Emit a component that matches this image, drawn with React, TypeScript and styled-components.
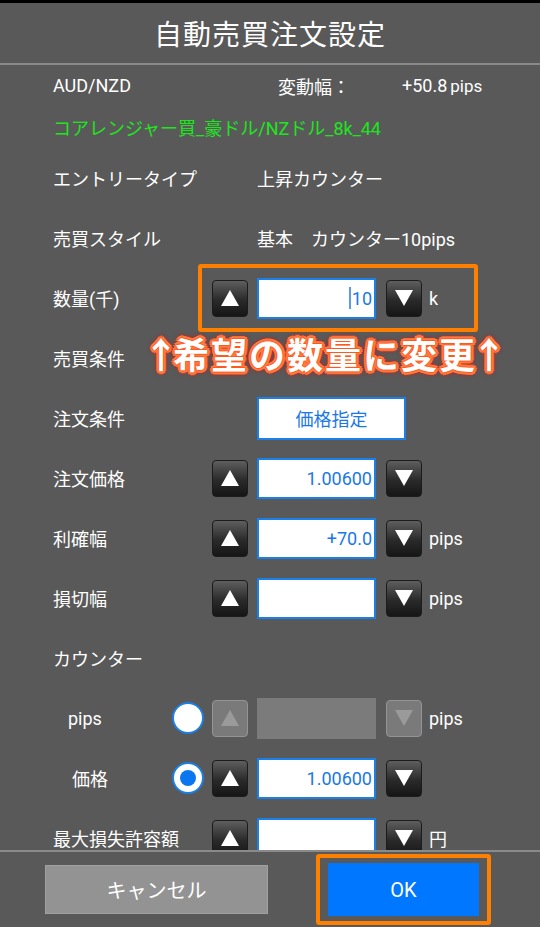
import styled, { createGlobalStyle, css } from "styled-components"

const GlobalStyle = createGlobalStyle`
    html, body {
        margin: 0;
        padding: 0;
        background: #595959;
    }
    body {
        font-family: Roboto, 'Noto Sans CJK JP', sans-serif;
        color: #fff;
    }
`

const ArrowUp = ({ disabled }: { disabled?: boolean }) => (
    <svg width="20" height="18" viewBox="0 0 20 18">
        <polygon points="10,1 19,17 1,17" fill={disabled ? '#9a9a9a' : '#fff'} />
    </svg>
)

const ArrowDown = ({ disabled }: { disabled?: boolean }) => (
    <svg width="20" height="18" viewBox="0 0 20 18">
        <polygon points="1,1 19,1 10,17" fill={disabled ? '#9a9a9a' : '#fff'} />
    </svg>
)

type StepperProps = {
    value?: string
    unit?: string
    disabled?: boolean
}

const Stepper = ({ value, unit, disabled }: StepperProps) => (
    <Controls>
        <StepButton $disabled={disabled}><ArrowUp disabled={disabled} /></StepButton>
        <NumberBox $disabled={disabled}>{value}</NumberBox>
        <StepButton $disabled={disabled}><ArrowDown disabled={disabled} /></StepButton>
        {unit && <Unit>{unit}</Unit>}
    </Controls>
)

const App = () => {
    return (
        <>
            <GlobalStyle />
            <Screen>
                <StatusBar />
                <TitleBar>自動売買注文設定</TitleBar>
                <Divider />

                <Body>
                    <InfoRow $height={41}>
                        <Pair>AUD/NZD</Pair>
                        <InfoLabel>変動幅：</InfoLabel>
                        <InfoValue>+50.8<Small>pips</Small></InfoValue>
                    </InfoRow>
                    <InfoRow $height={42} $green>コアレンジャー買_豪ドル/NZドル_8k_44</InfoRow>

                    <Row>
                        <Label>エントリータイプ</Label>
                        <Value>上昇カウンター</Value>
                    </Row>
                    <Row>
                        <Label>売買スタイル</Label>
                        <Value>基本　カウンター10pips</Value>
                    </Row>
                    <Row>
                        <Label>数量(千)</Label>
                        <Highlighted>
                            <Controls>
                                <StepButton><ArrowUp /></StepButton>
                                <NumberBox><Caret />10</NumberBox>
                                <StepButton><ArrowDown /></StepButton>
                                <Unit>k</Unit>
                            </Controls>
                        </Highlighted>
                    </Row>
                    <Row>
                        <Label>売買条件</Label>
                        <Annotation>
                            <Arrow>↑</Arrow>希望の数量に変更<Arrow>↑</Arrow>
                        </Annotation>
                    </Row>
                    <Row>
                        <Label>注文条件</Label>
                        <SelectBox>価格指定</SelectBox>
                    </Row>
                    <Row>
                        <Label>注文価格</Label>
                        <Stepper value="1.00600" />
                    </Row>
                    <Row>
                        <Label>利確幅</Label>
                        <Stepper value="+70.0" unit="pips" />
                    </Row>
                    <Row>
                        <Label>損切幅</Label>
                        <Stepper value="" unit="pips" />
                    </Row>
                    <Row>
                        <Label>カウンター</Label>
                    </Row>
                    <Row>
                        <Label $indent={15}>
                            pips
                            <Radio />
                        </Label>
                        <Stepper value="" unit="pips" disabled />
                    </Row>
                    <Row>
                        <Label $indent={19}>
                            価格
                            <Radio $checked />
                        </Label>
                        <Stepper value="1.00600" />
                    </Row>
                    <Row>
                        <Label>最大損失許容額</Label>
                        <Stepper value="" unit="円" />
                    </Row>
                </Body>

                <Footer>
                    <CancelButton>キャンセル</CancelButton>
                    <OkFrame>
                        <OkButton>OK</OkButton>
                    </OkFrame>
                </Footer>
            </Screen>
        </>
    )
}

const Screen = styled.div`
    width: 540px;
    height: 927px;
    display: flex;
    flex-direction: column;
    background: #595959;
    overflow: hidden;
`

const StatusBar = styled.div`
    height: 3px;
    flex-shrink: 0;
    background: #000;
`

const TitleBar = styled.div`
    height: 60px;
    flex-shrink: 0;
    display: flex;
    align-items: center;
    justify-content: center;
    font-size: 28px;
    letter-spacing: 1px;
    color: #fff;
`

const Divider = styled.div`
    height: 2px;
    flex-shrink: 0;
    background: #8a8a8a;
`

const Body = styled.div`
    flex: 1;
    overflow: hidden;
    display: flex;
    flex-direction: column;
`

const InfoRow = styled.div<{ $height: number; $green?: boolean }>`
    height: ${({ $height }) => $height}px;
    flex-shrink: 0;
    display: flex;
    align-items: center;
    padding-left: 53px;
    font-size: 18px;
    color: ${({ $green }) => $green ? '#1ee61e' : '#fff'};
`

const Pair = styled.span`
    width: 225px;
`

const InfoLabel = styled.span`
    width: 124px;
`

const InfoValue = styled.span`
    display: flex;
    align-items: baseline;
    gap: 3px;
`

const Small = styled.span`
    font-size: 17px;
`

const Row = styled.div`
    position: relative;
    height: 60px;
    flex-shrink: 0;
    display: flex;
    align-items: center;
    padding-left: 53px;
    font-size: 18px;
`

const Label = styled.div<{ $indent?: number }>`
    width: 159px;
    box-sizing: border-box;
    padding-left: ${({ $indent }) => $indent || 0}px;
    padding-right: 8px;
    display: flex;
    align-items: center;
    justify-content: space-between;
    flex-shrink: 0;
    white-space: nowrap;
`

const Value = styled.div`
    margin-left: 45px;
`

const Controls = styled.div`
    display: flex;
    align-items: center;
`

const StepButton = styled.div<{ $disabled?: boolean }>`
    width: 36px;
    height: 37px;
    box-sizing: border-box;
    border-radius: 4px;
    display: flex;
    align-items: center;
    justify-content: center;
    ${({ $disabled }) => $disabled
        ? css`
            background: #7a7a7a;
            border: 1px solid #949494;
        `
        : css`
            background: linear-gradient(#5e5e5e, #2a2a2a 55%, #161616);
            border: 1px solid #1c1c1c;
        `}
`

const NumberBox = styled.div<{ $disabled?: boolean }>`
    width: 119px;
    height: 41px;
    box-sizing: border-box;
    margin: 0 10px 0 9px;
    display: flex;
    align-items: center;
    justify-content: flex-end;
    padding-right: 2px;
    font-size: 18px;
    color: #1a78e6;
    ${({ $disabled }) => $disabled
        ? css`
            background: #7b7b7b;
        `
        : css`
            background: #fff;
            border: 2px solid #1a7fe6;
        `}
`

const Caret = styled.span`
    width: 1.5px;
    height: 22px;
    background: #5a9ce8;
    margin-right: 1px;
`

const Unit = styled.span`
    margin-left: 7px;
    font-size: 18px;
`

const Highlighted = styled.div`
    position: relative;
    &::before {
        content: '';
        position: absolute;
        left: -14px;
        right: -40px;
        top: -14px;
        bottom: -13px;
        border: 4px solid #ff7f00;
        border-radius: 3px;
    }
`

const Annotation = styled.div`
    position: absolute;
    left: 149px;
    top: 6px;
    font-size: 36px;
    font-weight: 700;
    line-height: 46px;
    letter-spacing: 2px;
    white-space: nowrap;
    color: #fff;
    text-shadow:
        1px 0 0 #ff5a1e, -1px 0 0 #ff5a1e, 0 1px 0 #ff5a1e, 0 -1px 0 #ff5a1e,
        2px 2px 0 #ff7a40, -2px -2px 0 #ff7a40, 2px -2px 0 #ff7a40, -2px 2px 0 #ff7a40,
        3px 0 0 #ff6a30, -3px 0 0 #ff6a30, 0 3px 0 #ff6a30, 0 -3px 0 #ff6a30,
        0 0 3px #ff1000, 0 0 4px #ff0000, 0 0 5px #ff0000, 0 0 6px #ff0000;
`

const Arrow = styled.span`
    letter-spacing: 0;
    margin: 0 -6px;
`

const SelectBox = styled.div`
    margin-left: 45px;
    width: 149px;
    height: 43px;
    box-sizing: border-box;
    background: #fff;
    border: 2px solid #1a7fe6;
    display: flex;
    align-items: center;
    justify-content: center;
    color: #1a78e6;
    font-size: 18px;
`

const Radio = styled.span<{ $checked?: boolean }>`
    width: 32px;
    height: 32px;
    box-sizing: border-box;
    border-radius: 50%;
    background: #fff;
    border: 2px solid #1a7fe6;
    display: flex;
    align-items: center;
    justify-content: center;
    &::after {
        content: '';
        width: 16px;
        height: 16px;
        border-radius: 50%;
        background: ${({ $checked }) => $checked ? '#0a77f0' : 'transparent'};
    }
`

const Footer = styled.div`
    height: 77px;
    flex-shrink: 0;
    border-top: 2px solid #8a8a8a;
    box-sizing: border-box;
    display: flex;
    align-items: center;
    padding-left: 45px;
`

const CancelButton = styled.div`
    width: 223px;
    height: 49px;
    box-sizing: border-box;
    background: #939393;
    border: 1px solid #a0a0a0;
    display: flex;
    align-items: center;
    justify-content: center;
    font-size: 20px;
    color: #fff;
`

const OkFrame = styled.div`
    margin-left: 48px;
    padding: 5px 8px;
    border: 4px solid #ff7f00;
    border-radius: 3px;
`

const OkButton = styled.div`
    width: 151px;
    height: 53px;
    background: #0077ff;
    display: flex;
    align-items: center;
    justify-content: center;
    font-size: 20px;
    color: #fff;
`

export default App
